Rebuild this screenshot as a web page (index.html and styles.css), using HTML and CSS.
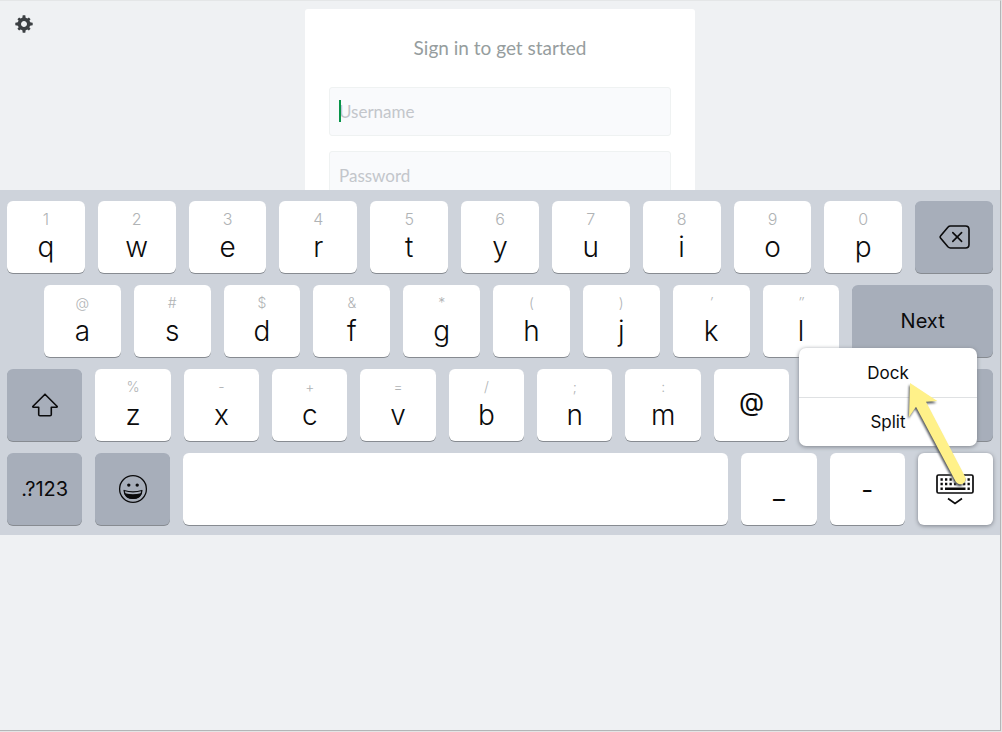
FILE: index.html
```html
<!DOCTYPE html>
<html lang="en">
<head>
<meta charset="utf-8">
<title>Sign in</title>
<link rel="stylesheet" href="styles.css">
</head>
<body>
<div class="screen">
  <main class="signin">
    <button class="settings" type="button" aria-label="Settings">
      <svg width="18" height="18" viewBox="-9 -9 18 18" fill="#3c4043">
        <circle r="4.7" fill="none" stroke="#3c4043" stroke-width="3.4"/>
        <g id="teeth"><path d="M-1.7-5.8L-1.3-8.7H1.3L1.7-5.8zM-1.7 5.8L-1.3 8.7H1.3L1.7 5.8zM-5.8-1.7L-8.7-1.3V1.3L-5.8 1.7zM5.8-1.7L8.7-1.3V1.3L5.8 1.7z"/></g>
        <use href="#teeth" transform="rotate(45) scale(.93)"/>
      </svg>
    </button>
    <form class="card">
      <h1 class="title">Sign in to get started</h1>
      <div class="field">
        <input class="input" type="text" placeholder="Username" aria-label="Username">
        <span class="caret"></span>
      </div>
      <div class="field">
        <input class="input" type="password" placeholder="Password" aria-label="Password">
      </div>
    </form>
  </main>

  <section class="keyboard" aria-label="Keyboard">
    <div class="row row-top">
      <button class="key"><span class="hint">1</span><span class="letter">q</span></button>
      <button class="key"><span class="hint">2</span><span class="letter">w</span></button>
      <button class="key"><span class="hint">3</span><span class="letter">e</span></button>
      <button class="key"><span class="hint">4</span><span class="letter">r</span></button>
      <button class="key"><span class="hint">5</span><span class="letter">t</span></button>
      <button class="key"><span class="hint">6</span><span class="letter">y</span></button>
      <button class="key"><span class="hint">7</span><span class="letter">u</span></button>
      <button class="key"><span class="hint">8</span><span class="letter">i</span></button>
      <button class="key"><span class="hint">9</span><span class="letter">o</span></button>
      <button class="key"><span class="hint">0</span><span class="letter">p</span></button>
      <button class="key dark single" aria-label="Delete">
        <svg width="32" height="24" viewBox="-1 0 32 24" fill="none" stroke="#0b0b0c" stroke-width="1.6" stroke-linecap="round" stroke-linejoin="round">
          <path d="M11.5 1H26.500q3.500 0 3.500 3.500v15q0 3.500-3.500 3.500H11.500q-1.500 0-2.600-1.200L1.500 13q-.9-1 0-2L8.900 2.200Q10 1 11.500 1z"/>
          <path d="M13.800 7.600l8.800 8.800M22.600 7.600l-8.800 8.800"/>
        </svg>
      </button>
    </div>
    <div class="row row-home">
      <button class="key"><span class="hint small">@</span><span class="letter">a</span></button>
      <button class="key"><span class="hint small">#</span><span class="letter">s</span></button>
      <button class="key"><span class="hint small">$</span><span class="letter">d</span></button>
      <button class="key"><span class="hint small">&amp;</span><span class="letter">f</span></button>
      <button class="key"><span class="hint small">*</span><span class="letter">g</span></button>
      <button class="key"><span class="hint small">(</span><span class="letter">h</span></button>
      <button class="key"><span class="hint small">)</span><span class="letter">j</span></button>
      <button class="key"><span class="hint small prime">′</span><span class="letter">k</span></button>
      <button class="key"><span class="hint small prime">″</span><span class="letter">l</span></button>
      <button class="key dark single word">Next</button>
    </div>
    <div class="row row-shift">
      <button class="key dark single" aria-label="Shift">
        <svg width="28" height="24" viewBox="0 0 28 24" fill="none" stroke="#0b0b0c" stroke-width="1.6" stroke-linejoin="round">
          <path d="M14 1.200L26 13.200q.7 1-.5 1H20.300V21.500q0 1.300-1.300 1.300H9q-1.300 0-1.300-1.300V14.200H2.500q-1.200 0-.5-1z"/>
        </svg>
      </button>
      <button class="key"><span class="hint small">%</span><span class="letter">z</span></button>
      <button class="key"><span class="hint small">-</span><span class="letter">x</span></button>
      <button class="key"><span class="hint small">+</span><span class="letter">c</span></button>
      <button class="key"><span class="hint small">=</span><span class="letter">v</span></button>
      <button class="key"><span class="hint small">/</span><span class="letter">b</span></button>
      <button class="key"><span class="hint small">;</span><span class="letter">n</span></button>
      <button class="key"><span class="hint small">:</span><span class="letter">m</span></button>
      <button class="key single symbol at">@</button>
      <button class="key" aria-label="Period"></button>
      <button class="key dark" aria-label="Right shift"></button>
    </div>
    <div class="row row-space">
      <button class="key dark single word">.?123</button>
      <button class="key dark single" aria-label="Emoji">
        <svg width="30" height="30" viewBox="-15 -15 30 30" fill="none" stroke="#0b0b0c" stroke-width="1.3">
          <circle r="13.4"/>
          <circle cx="-4.2" cy="-3.9" r="1.700" fill="#0b0b0c" stroke="none"/>
          <circle cx="4.2" cy="-3.9" r="1.700" fill="#0b0b0c" stroke="none"/>
          <path d="M-8.900 1.500Q0 4.200 8.900 1.500Q8.300 9.400 0 9.400T-8.900 1.500z" stroke-linejoin="round"/>
          <path d="M-8 4.800Q0 7 8 4.800Q6 9.400 0 9.400T-8 4.800z" fill="#0b0b0c"/>
        </svg>
      </button>
      <button class="key" aria-label="Space"></button>
      <button class="key single symbol">_</button>
      <button class="key single symbol">-</button>
      <div class="hide">
        <button class="key single raised" aria-label="Hide keyboard">
          <svg width="38" height="34" viewBox="0 -2 38 34" fill="none" stroke="#0b0b0c">
            <rect x="1" y="1" width="36" height="18" rx="1.5" stroke-width="1.7"/>
            <path d="M4.500 5.500H34M4.500 10H34" stroke-width="2.4" stroke-dasharray="2.3 2.2"/>
            <path d="M4.500 14.700h2.300M9 14.700h20.500M31.500 14.700h2.300" stroke-width="2.4"/>
            <path d="M12 24.500l7 5 7-5" stroke-width="1.7"/>
          </svg>
        </button>
        <div class="menu">
          <button class="item" type="button">Dock</button>
          <button class="item" type="button">Split</button>
        </div>
        <svg class="arrow" width="64" height="112" viewBox="0 0 64 112">
          <path d="M7 6L34.300 24L23 24.700L62 99.500A5.200 5.200 0 0 1 52.700 104.500L13 29.700L6 40z" fill="#fff189"/>
        </svg>
      </div>
    </div>
  </section>
</div>
</body>
</html>
```
FILE: styles.css
```css
* {
  box-sizing: border-box;
}

body {
  margin: 0;
  min-height: 100vh;
  display: flex;
  padding: 0 1px 1px 0;
  background: #e4e4e5;
}

button {
  border: 0;
  padding: 0;
  margin: 0;
  background: none;
  color: #0b0b0c;
  font: inherit;
}

svg {
  display: block;
}

.screen {
  flex: 1;
  min-width: 0;
  background: #eff1f3;
  border-top: 1px solid #e4e6e7;
  border-right: 1px solid #b4b5b7;
  border-bottom: 1px solid #b4b5b7;
  font-family: Inter, "Liberation Sans", sans-serif;
}

.signin {
  position: relative;
  height: 189px;
  overflow: hidden;
  padding-top: 8px;
  font-family: Lato, sans-serif;
}

.settings {
  position: absolute;
  left: 15px;
  top: 14px;
}

.card {
  width: 390px;
  margin: 0 auto;
  padding: 25px 24px 32px;
  display: flex;
  flex-direction: column;
  gap: 15px;
  background: #fff;
  border-radius: 3px;
}

.title {
  margin: 0 0 10px;
  font-size: 19px;
  line-height: 28px;
  font-weight: 400;
  text-align: center;
  color: #969d9e;
}

.field {
  position: relative;
}

.input {
  display: block;
  width: 100%;
  height: 49px;
  padding: 0 9px;
  border: 1px solid #eff2f2;
  border-radius: 3px;
  background: #f9fafc;
  font: 17px/24px Lato, sans-serif;
}

.input::placeholder {
  color: #c3c6cb;
  opacity: 1;
}

.caret {
  position: absolute;
  left: 10px;
  top: 13px;
  width: 2px;
  height: 22px;
  background: #089449;
}

.keyboard {
  display: grid;
  gap: 12px;
  padding: 11px 7px 10px;
  background: #ced3db;
}

.row {
  display: grid;
  gap: 13px;
  height: 72px;
}

.row-top {
  grid-template-columns: repeat(11, 1fr);
}

.row-home {
  padding-left: 37px;
  grid-template-columns: repeat(9, 77fr) 141fr;
}

.row-shift {
  grid-template-columns: repeat(10, 75fr) 102fr;
}

.row-space {
  grid-template-columns: 75fr 75fr 543fr 75fr 75fr 75fr;
}

.key {
  display: flex;
  flex-direction: column;
  align-items: center;
  min-width: 0;
  height: 72px;
  padding-top: 8px;
  border-radius: 6px;
  background: #fff;
  box-shadow: 0 1px 0 #878b91;
}

.dark {
  background: #a7aeba;
}

.single {
  justify-content: center;
  padding: 0;
}

.hint {
  font-size: 16px;
  line-height: 20px;
  font-weight: 300;
  color: #b0b3b5;
}

.small {
  font-size: 14px;
}

.prime {
  font-style: italic;
}

.letter {
  font-size: 28px;
  line-height: 36px;
  font-weight: 350;
}

.word {
  font-size: 20px;
}

.symbol {
  font-size: 26px;
}

.at {
  padding-bottom: 8px;
}

.hide {
  position: relative;
}

.raised {
  width: 100%;
  box-shadow: 0 1px 4px #7d828a;
}

.menu {
  position: absolute;
  right: 16px;
  bottom: 79px;
  width: 178px;
  border-radius: 7px;
  background: #fff;
  box-shadow: 0 1px 4px #7d828a;
}

.item {
  display: block;
  width: 100%;
  height: 49px;
  font-size: 17px;
}

.item + .item {
  border-top: 1px solid #dfe1e3;
}

.arrow {
  position: absolute;
  right: 26px;
  bottom: 36px;
  filter: drop-shadow(-1px 2px 1px #55595f);
}
```
